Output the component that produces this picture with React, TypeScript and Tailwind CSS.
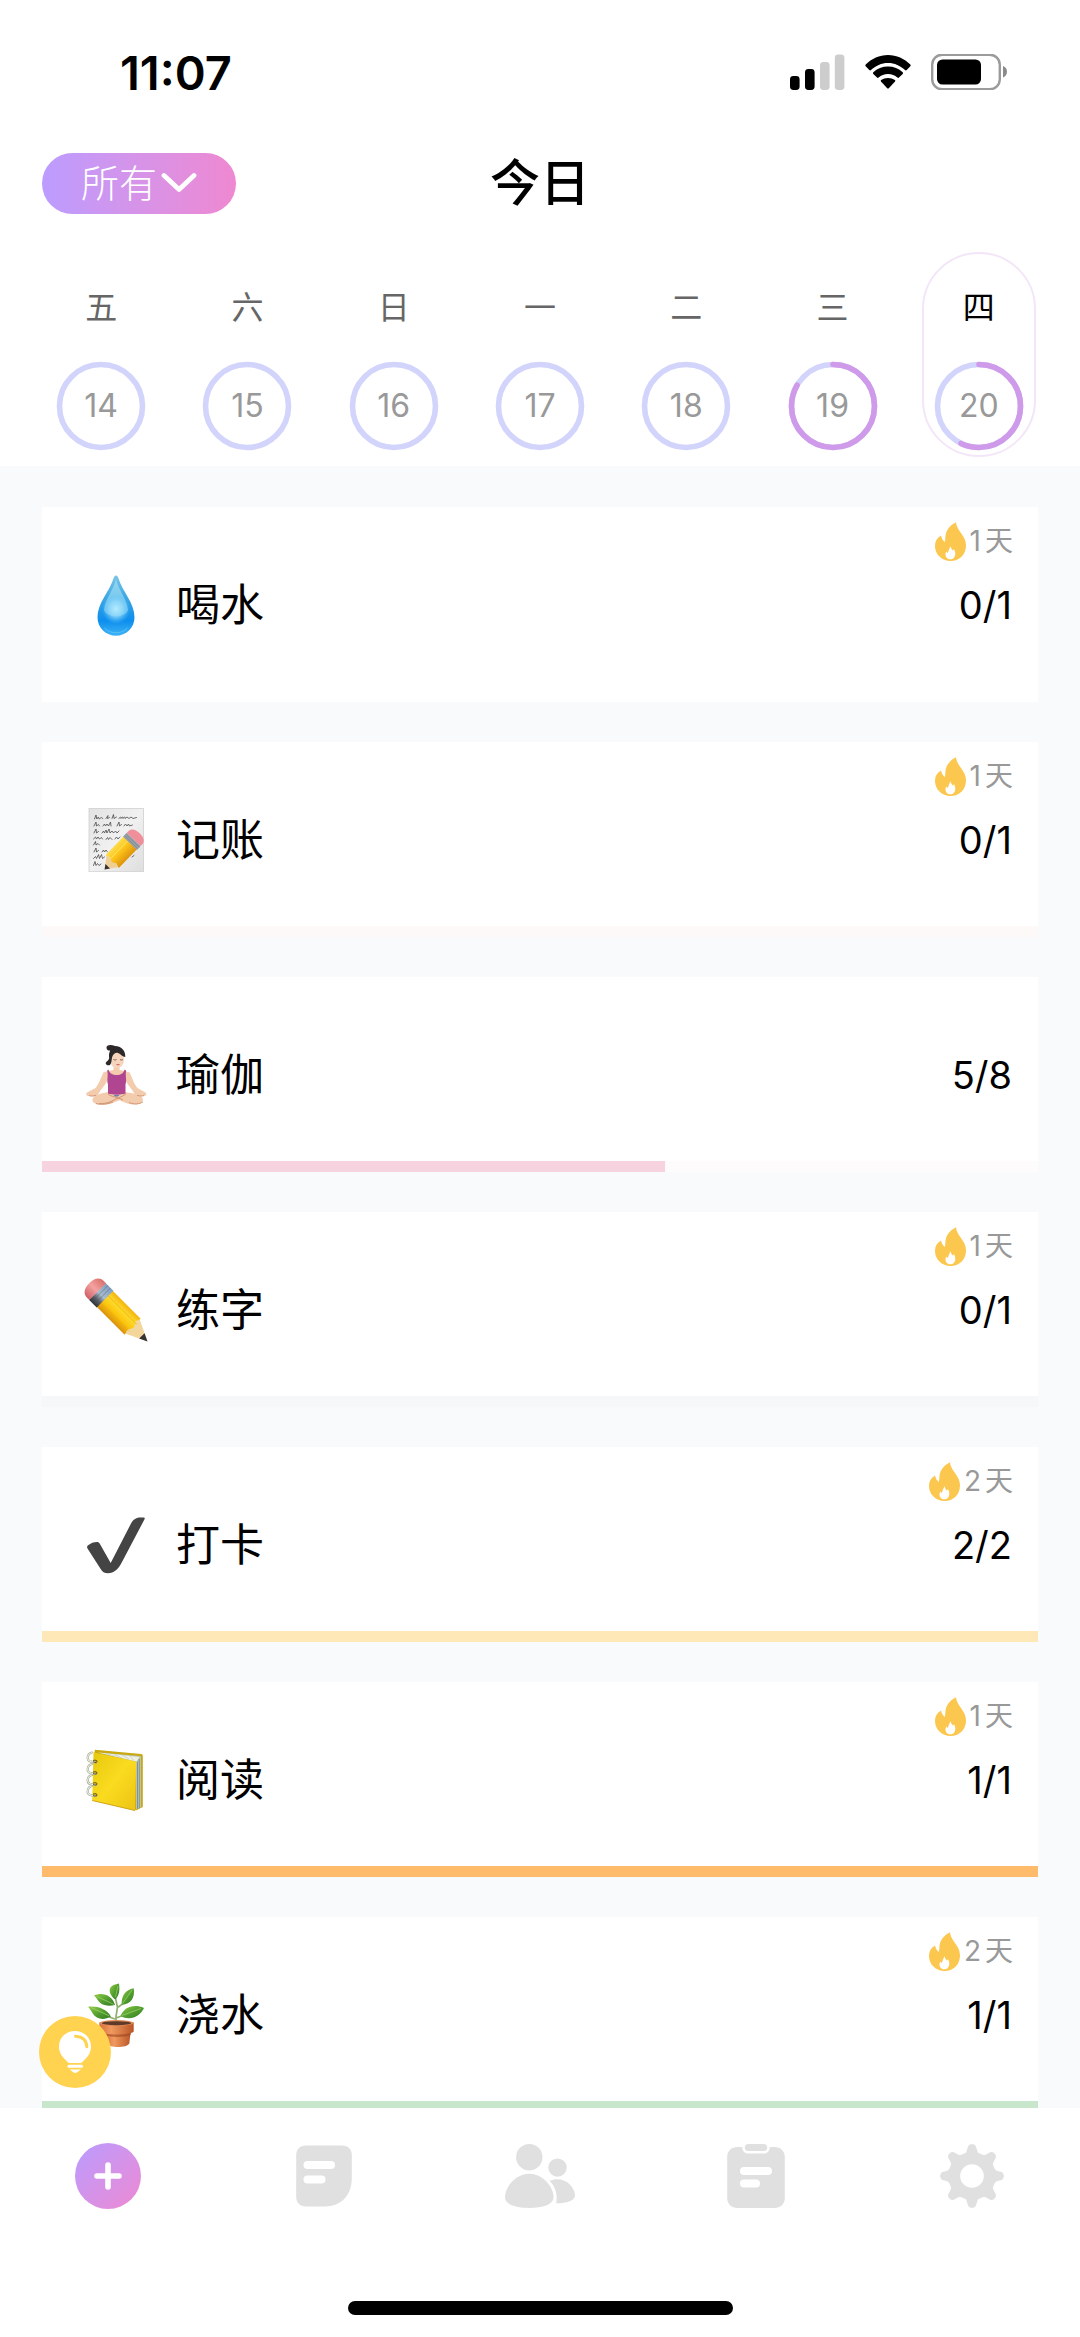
import type { ReactNode } from 'react';

const CJK = "font-['Inter','Noto_Sans_CJK_SC',sans-serif]";

/* ---------- status bar ---------- */

function StatusBar() {
  return (
    <div className="flex h-36 shrink-0 items-center justify-between pr-[73px] pl-[120px]">
      <span className="text-[47px] leading-none font-semibold text-black">11:07</span>
      <div className="flex items-center gap-5" aria-hidden="true">
        <svg className="h-9 w-[55px]" viewBox="0 0 55 36">
          <rect x="0" y="22" width="9.6" height="14" rx="3.4" fill="#000" />
          <rect x="15" y="15" width="9.6" height="21" rx="3.4" fill="#000" />
          <rect x="30" y="8" width="9.6" height="28" rx="3.4" fill="#cdcdcd" />
          <rect x="44.8" y="0.5" width="9.6" height="35.5" rx="3.4" fill="#cdcdcd" />
        </svg>
        <svg className="h-9 w-[46px]" viewBox="0 0 46 36">
          <path d="M0.7 10.6C6.600 4.500 14.500 1 23 1s16.400 3.500 22.300 9.600c.5.500.5 1.200 0 1.700l-3.600 3.700c-.5.500-1.200.5-1.700 0C35.500 11.600 29.500 8.900 23 8.900S10.500 11.600 6 16c-.5.500-1.200.5-1.700 0L.7 12.300c-.5-.5-.5-1.200 0-1.700Z" fill="#000" />
          <path d="M8.300 18.300C12.200 14.600 17.300 12.600 23 12.600s10.800 2 14.700 5.700c.5.500.5 1.100 0 1.600l-3.700 3.700c-.4.500-1.100.5-1.600 0-2.500-2.300-5.700-3.600-9.400-3.600s-6.900 1.300-9.400 3.600c-.5.500-1.200.5-1.600 0l-3.700-3.700c-.5-.5-.5-1.100 0-1.600Z" fill="#000" />
          <path d="M16.100 26.100C18 24.700 20.400 24 23 24s5 .7 6.900 2.100c.5.400.5 1 .1 1.500l-6.200 6.600c-.5.500-1.100.5-1.600 0L16 27.600c-.4-.5-.4-1.100.1-1.500Z" fill="#000" />
        </svg>
        <svg className="h-9 w-[76px]" viewBox="0 0 76 36">
          <rect x="1.200" y="0.700" width="67.600" height="34.600" rx="10" fill="none" stroke="#9b9b9b" strokeWidth="2.400" />
          <rect x="6" y="5.500" width="44" height="25" rx="5.500" fill="#000" />
          <path d="M72 12c2.600 1 4 3.100 4 5.700s-1.400 4.700-4 5.700Z" fill="#8b8b8b" />
        </svg>
      </div>
    </div>
  );
}

/* ---------- week strip ---------- */

type Day = { label: string; date: number; progress: number; selected?: boolean };

const DAYS: Day[] = [
  { label: '五', date: 14, progress: 0 },
  { label: '六', date: 15, progress: 0 },
  { label: '日', date: 16, progress: 0 },
  { label: '一', date: 17, progress: 0 },
  { label: '二', date: 18, progress: 0 },
  { label: '三', date: 19, progress: 5 / 6 },
  { label: '四', date: 20, progress: 4 / 7, selected: true },
];

function DayButton({ label, date, progress, selected }: Day) {
  return (
    <button
      type="button"
      aria-pressed={!!selected}
      className={`flex h-[205px] w-[114px] flex-col items-center justify-between rounded-full border-2 pt-[34px] pb-1 ${
        selected ? 'border-[#f3e6f8] text-black' : 'border-transparent text-[#666]'
      }`}
    >
      <span className="text-[32px] leading-10">{label}</span>
      <span className="grid size-[90px] place-items-center text-[#999]">
        <svg className="col-start-1 row-start-1 size-full -rotate-90" viewBox="0 0 90 90" aria-hidden="true">
          <circle cx="45" cy="45" r="41.500" fill="none" stroke="#d2d4fc" strokeWidth="5.600" />
          {progress > 0 && (
            <circle
              cx="45"
              cy="45"
              r="41.500"
              fill="none"
              stroke="#ce9ae9"
              strokeWidth="5.600"
              strokeLinecap="round"
              pathLength={1}
              strokeDasharray={`${progress} 1`}
            />
          )}
        </svg>
        <span className="col-start-1 row-start-1 text-[32px] leading-10">{date}</span>
      </span>
    </button>
  );
}

/* ---------- habit pictures ---------- */

function Picture({ children }: { children: ReactNode }) {
  return (
    <svg className="size-16 shrink-0" viewBox="0 0 64 64" aria-hidden="true">
      {children}
    </svg>
  );
}

function DropPicture() {
  return (
    <Picture>
      <defs>
        <linearGradient id="dropBody" x1="0" y1="0" x2="0" y2="1">
          <stop offset="0" stopColor="#7cc6e6" />
          <stop offset="0.35" stopColor="#3fa9e4" />
          <stop offset="0.75" stopColor="#0d8eee" />
          <stop offset="1" stopColor="#3fb4f5" />
        </linearGradient>
        <radialGradient id="dropShine" cx="0.5" cy="0.5" r="0.5">
          <stop offset="0" stopColor="#b5ebff" />
          <stop offset="0.5" stopColor="#93dafb" stopOpacity="0.8" />
          <stop offset="1" stopColor="#5cc0f5" stopOpacity="0" />
        </radialGradient>
      </defs>
      <path d="M32 2.500c1.300 0 2 1.400 2.700 3.600C38.500 18.500 50.500 30 50.500 44.300 50.500 55 42 62.800 32 62.800S13.500 55 13.500 44.300C13.500 30 25.500 18.500 29.300 6.100 30 3.900 30.700 2.500 32 2.500Z" fill="url(#dropBody)" />
      <path d="M32 6c2 10 11 20 12 31-3 8-21 8-24 0 1-11 10-21 12-31Z" fill="#b5ecfa" opacity="0.500" />
      <ellipse cx="32" cy="36" rx="14" ry="15" fill="url(#dropShine)" />
      <path d="M20 54c6 7 18 7 24 0-3 8-21 8-24 0Z" fill="#5cc6fa" opacity="0.8" />
    </Picture>
  );
}

function MemoPicture() {
  return (
    <Picture>
      <defs>
        <linearGradient id="paper" x1="0" y1="0" x2="1" y2="1">
          <stop offset="0" stopColor="#e2e2e2" />
          <stop offset="0.5" stopColor="#f1f1f1" />
          <stop offset="1" stopColor="#dedede" />
        </linearGradient>
        <linearGradient id="memoPencil" x1="0" y1="0" x2="0" y2="1">
          <stop offset="0" stopColor="#fddc4a" />
          <stop offset="0.45" stopColor="#fcc419" />
          <stop offset="1" stopColor="#dd930c" />
        </linearGradient>
      </defs>
      <rect x="5" y="0.300" width="54.500" height="63.500" fill="url(#paper)" stroke="#cacaca" strokeWidth="0.700" />
      <g fill="none" stroke="#4a4a4a" strokeWidth="0.800" strokeLinecap="round">
        <path d="M10.500 11l1.500-4 .8 4 1.500-2 1 2 2-1.500 1.500 1M22 10.500l2-3-.5 3 2-1M28 10.500l1.500-4 .5 4 2.500-1.500M35 10.500c1-2 2-2 2 0 1-2 2-2 2 0 1-2 2-2 2 0l2-1.500 2 1.500 2-1.500 2 1.500 3.500-1" />
        <path d="M10 18l2-4 .5 4 2-1.500 1 1.500M19 18l1.500-2 1 2 1.500-2 1.500 2 2-4 .5 4M33 18l2-4 .5 4 2-1.500M40 18l1.500-2 1.500 2 1.500-2 1 2 3-1" />
        <path d="M10 25l2-4 .5 4 2-1.500M18 25l1.500-2 1 2 1.500-3 1 3 2-4 1 4 2-2 1.500 2 2-2 1.500 2 2-2" />
        <path d="M9.500 31l2-2 1 2 1.500-2 1.500 2 2-1.500 1 1.500M22 31.500l1.500-2 1 2 1.500-2 2 2M31 31l1.500-2 1.500 2 2-2" />
        <path d="M9.500 37l2-3.500.5 3.500 2-1.500 1.500 1.500" />
        <path d="M10 44l2-4 .5 4 2-1.500M18 44l1.500-2 1 2 1.500-2 1.500 2" />
        <path d="M9.500 50.500l2-2 1 2 2-4 1 4 2-4 1 4 2-1.500" />
        <path d="M9.500 57.500l1.500-4 1 4 1.500-2 1.500 2 2-1.500M48 49l2-1.500" />
      </g>
      <g transform="translate(20 61) rotate(-46)">
        <path d="M0 .8 12-7.800 12 9.600Z" fill="#f0cf94" />
        <path d="M0 .8 4.500-2.400 4.500 4Z" fill="#333" />
        <path d="M11-8.500H38V10H11l1.500-5L10.500.7l2-4.700Z" fill="url(#memoPencil)" />
        <path d="M12-2.500H38" stroke="#ffe873" strokeWidth="0.800" />
        <rect x="36.500" y="-8.800" width="5.500" height="19.200" fill="#9aa1a8" />
        <path d="M38.200-8.500v19M40.200-8.500v19" stroke="#7d848b" strokeWidth="0.700" />
        <path d="M42-8.800h2c4.500 0 6.500 4 6.500 9.600s-2 9.600-6.500 9.600h-2Z" fill="#f08f9a" />
      </g>
    </Picture>
  );
}

function YogaPicture() {
  return (
    <Picture>
      <g fill="#f3ccae">
        <path d="M20 28.500c-3 5-4 11-8.500 16.500l-8.500 4.500c-1.500 1-1 3 1 3.500l8 .5c2-1 3-4 4.500-6C20 43.500 23 38.500 25.500 33.500Z" />
        <path d="M45 28.500c3 5 4 11 8.500 16.500l8 4.500c1.500 1 1 3-1 3.500l-7.500.5c-2-1-3-4-4.500-6C45 43.500 42 38.500 39.500 33.500Z" />
        <path d="M29.500 22h6v5c3 1 7 .5 9.500 3l-4 6H24l-4-6c2.500-2.500 6.500-2 9.500-3Z" />
        <path d="M24 49c-6 1-14 3-15.500 7-.8 4 4 6 10 5.800 6 0 11-2 17-4.500 6 2.700 10 4.500 16 4.200 5 0 8-2.500 7.300-5.500C58 52 48 50 41 49Z" />
      </g>
      <path d="M24 51c3 3 10 3 15 6M42 51c-4 3-9 4-14 7-4 2-9 3-13 2.500" fill="none" stroke="#d09673" strokeWidth="1" />
      <path d="M5 52.500c2 .8 4 .6 7-.2M60 52.500c-2 .8-4 .6-7-.2M12 60.500c6 1.500 12 .5 17-1.500M45 59.500c5 2.200 10 1.600 14-.5" fill="none" stroke="#cf9270" strokeWidth="0.900" />
      <ellipse cx="33" cy="16.500" rx="7" ry="8.800" fill="#f6d5bc" />
      <path d="M22.500 5C22 2.500 26 1 31 3c6 0 10.500 4 10.300 11-2.800 0-4.300-3-7.300-4-2.500-.7-5 1-6 4.500C27.500 18 27.500 20 26 22c-2.500 1-4.500-.5-4.300-2.300.8-1.200 3.300-2.200 3.500-4.700-.4-2.500-.4-5 1-7.500-1.700.5-3.500-.7-3.700-2.500Z" fill="#2c2829" />
      <path d="M29.500 16.500c1 .6 2 .6 3 0M36 16.500c1 .6 2 .6 3 0" fill="none" stroke="#5b4238" strokeWidth="0.800" />
      <path d="M32.500 21.500c1 .5 2 .5 3 0" fill="none" stroke="#c25a5a" strokeWidth="1" />
      <path d="M24.500 26.500c1 4 4 5.500 8.200 5.500S39.500 30.500 40.500 26.500l1.500 1c-.8 6 1 9-.5 14v9c-4 1.500-13 1.500-17.500 0v-9c-1.500-5 .5-8-.8-14Z" fill="#b04591" />
      <path d="M29 51.500c2 .8 5 .8 7 0l-2 2h-3Z" fill="#6a7fb0" />
    </Picture>
  );
}

function PencilPicture() {
  return (
    <Picture>
      <defs>
        <linearGradient id="pencilBody" x1="0" y1="0" x2="0" y2="1">
          <stop offset="0" stopColor="#f3b20c" />
          <stop offset="0.3" stopColor="#fddb2e" />
          <stop offset="0.62" stopColor="#fcc70f" />
          <stop offset="1" stopColor="#d9900b" />
        </linearGradient>
        <linearGradient id="pencilBand" x1="0" y1="0" x2="0" y2="1">
          <stop offset="0" stopColor="#7f9fc4" />
          <stop offset="0.5" stopColor="#a9bccd" />
          <stop offset="0.75" stopColor="#5a6068" />
          <stop offset="1" stopColor="#2f3237" />
        </linearGradient>
        <linearGradient id="pencilEraser" x1="0" y1="0" x2="0" y2="1">
          <stop offset="0" stopColor="#d9706c" />
          <stop offset="0.5" stopColor="#f4a2a0" />
          <stop offset="1" stopColor="#cf5f66" />
        </linearGradient>
      </defs>
      <g transform="translate(63.500 63.500) rotate(-135)">
        <g transform="scale(1 -1)">
          <path d="M0 0 22-10.500 22 10.500Z" fill="#f3d69b" />
          <path d="M0 0 8-3.800 8 3.800Z" fill="#333" />
          <path d="M21-11.300H62V11.300H21l1.500-5.500L19.500 0l3-5.500Z" fill="url(#pencilBody)" />
          <path d="M20-4.500H62M21 6H62" stroke="#eca90b" strokeWidth="0.800" />
          <rect x="60" y="-11.800" width="11" height="23.600" fill="url(#pencilBand)" />
          <path d="M64-11.500v23M67.500-11.500v23" stroke="#4a5058" strokeOpacity="0.450" strokeWidth="0.900" />
          <path d="M70.500-11.800h3.500c5.500 0 8.500 5 8.500 11.800s-3 11.800-8.500 11.800h-3.500Z" fill="url(#pencilEraser)" />
        </g>
      </g>
    </Picture>
  );
}

function CheckPicture() {
  return (
    <Picture>
      <path d="M3.500 35.500c-.7-1.200-.5-2.400.6-3.200C6.500 30.200 10 29 13 29c1.300 0 2.200.6 2.800 1.800L26.700 50 46.500 11.500C49 6.500 52 4.500 56 4.500h3.500c1.200 0 1.500.8 1 1.800L38 49c-3.500 7-8 11.300-14 11.300-3.700 0-5.700-1.500-7.500-4.500Z" fill="#444" />
    </Picture>
  );
}

function NotebookPicture() {
  return (
    <Picture>
      <defs>
        <linearGradient id="cover" x1="0" y1="0" x2="1" y2="1">
          <stop offset="0" stopColor="#e6c80c" />
          <stop offset="0.5" stopColor="#fadb1f" />
          <stop offset="1" stopColor="#ecc314" />
        </linearGradient>
      </defs>
      <path d="M11 1.800 57 6c1.200.2 1.800.8 1.800 2V59l-7 3.500L10 6Z" fill="#c9a90d" />
      <path d="M14 4.500 57 8v51l-5 2.500V14Z" fill="#b9c3b5" />
      <path d="M53.500 13.500v47.500M55.300 11v49" stroke="#7f8f86" strokeWidth="0.900" />
      <path d="M14 4.500 55.500 9l-3 4.500Z" fill="#eef0e4" />
      <path d="M22 5.500l9 3M30 6.500l8 3.500M38 7l7 4M46 8l4 4.500" stroke="#c9cdbf" strokeWidth="0.800" />
      <path d="M9.500 4.200 50.800 13.200c.9.200 1.400.8 1.400 1.700L51 62.500 8.200 52.500C8.800 36 9 20 9.500 4.200Z" fill="url(#cover)" />
      <path d="M8.200 52.500 51 62.500" stroke="#c99e10" strokeWidth="0.900" />
      {[9, 20.500, 31.500, 42.500].map((y) => (
        <g key={y} fill="none" strokeLinecap="round">
          <path d={`M8 ${y - 4.500}c-5 1-6 8-1 9.200l5 .8`} stroke="#9aa08c" strokeWidth="2.200" />
          <path d={`M8 ${y - 4.500}c-5 1-6 8-1 9.200l5 .8`} stroke="#edf0de" strokeWidth="1.200" />
          <path d={`M9.500 ${y + 5}c2 1 3.500 .6 3.500-.6s-1.500-1.400-3.500-1`} stroke="#5a4a10" strokeWidth="1" />
        </g>
      ))}
    </Picture>
  );
}

function PlantPicture() {
  return (
    <Picture>
      <defs>
        <linearGradient id="leaf" x1="0" y1="0" x2="1" y2="1">
          <stop offset="0" stopColor="#8fcc45" />
          <stop offset="0.550" stopColor="#4f9c2e" />
          <stop offset="1" stopColor="#357a25" />
        </linearGradient>
        <linearGradient id="pot" x1="0" y1="0" x2="1" y2="0">
          <stop offset="0" stopColor="#d9703c" />
          <stop offset="0.350" stopColor="#f09a5f" />
          <stop offset="1" stopColor="#b95526" />
        </linearGradient>
      </defs>
      <path d="M32 39c-.5-6 .5-10 1.500-14.500L31.500 15M33.500 24.500 40 20M32 35l7-2.500M31 36l-6-2" fill="none" stroke="#8fb070" strokeWidth="1.700" />
      <g fill="url(#leaf)">
        <path d="M35 .5c.8 6 .8 11.500-3.800 16C26 12.500 23.500 6 28 3 30 1.500 32.500 1.500 35 .5Z" />
        <path d="M10 12.500c8-3.500 18-1 21 9.500-8 2-14.500 0-17.500-5.200C12.500 15 11.500 14 10 12.500Z" />
        <path d="M49.700 5.200c1.500 9-2.500 16-12 16.500C37 13 41.500 6.500 49.700 5.200Z" />
        <path d="M4 23.800c9-1 18.500 2 23 9.700-7 4-14.500 3-18.500-3.200C7.300 28 6 26 4 23.800Z" />
        <path d="M60 25c-3.500 8-13.500 13.500-23.500 8C40 24 50 20.500 60 25Z" />
      </g>
      <path d="M34 3l-2.500 11M13 13.500l17 8M48 7 38.500 20.500M7 24.500l18.500 8.500M57 25.500l-19 7" stroke="#b5dc7e" strokeWidth="0.600" />
      <path d="M21 48h25.800l-1.500 12.500C44 63 39 64 34 64s-10-1-11.500-3.500Z" fill="url(#pot)" />
      <path d="M20.500 48.500h26.600l-.4 3.500c-7 2.500-19 2.500-25.700 0Z" fill="#9c4520" opacity="0.600" />
      <path d="M15.300 39.500h34.400v9C48 52.500 17 52.500 15.300 48.500Z" fill="url(#pot)" />
      <ellipse cx="32.500" cy="40" rx="17.200" ry="2.900" fill="#e08a55" />
      <ellipse cx="32.500" cy="40.200" rx="14.500" ry="2" fill="#5e3a28" />
    </Picture>
  );
}

function Flame() {
  return (
    <svg className="h-[39px] w-[31px] shrink-0" viewBox="0 0 31 39" aria-hidden="true">
      <path d="M21 .3c.3 4.200 2.500 7.200 5 10.700 2.800 4 5 7.500 5 12.400C31 32.500 24.200 39 15.500 39S0 32.500 0 23.800c0-4.500 2-8 6-10.300.6 2.500 1.400 4.500 3.700 6.500C10.800 17.500 9.900 14.500 11 11.200 12.600 6.200 16.500 2.500 21 .3Z" fill="#fcc74f" />
      <path d="M15.800 24.300c.1 1.700.8 2.700 2 4.200.5-.4.900-.9 1.200-1.600.7 1.500 1.300 3 1.300 4.800 0 3.300-2.100 5.600-4.900 5.600-2.900 0-4.900-2-4.900-4.800 0-1.200.2-2.100.7-3.100.6.8 1 1.100 1.700 1.300.9-2.100 1.300-4.600 2.900-6.400Z" fill="#fff" />
    </svg>
  );
}

/* ---------- habit list ---------- */

type Habit = {
  name: string;
  picture: ReactNode;
  done: number;
  goal: number;
  streak?: number;
  track: string;
  fill: string;
};

const HABITS: Habit[] = [
  { name: '喝水', picture: <DropPicture />, done: 0, goal: 1, streak: 1, track: 'bg-white', fill: 'bg-sky-200' },
  { name: '记账', picture: <MemoPicture />, done: 0, goal: 1, streak: 1, track: 'bg-[#fdf9f8]', fill: 'bg-orange-200' },
  { name: '瑜伽', picture: <YogaPicture />, done: 5, goal: 8, track: 'bg-[#fefbfd]', fill: 'bg-[#f6d3df]' },
  { name: '练字', picture: <PencilPicture />, done: 0, goal: 1, streak: 1, track: 'bg-[#f6f7f9]', fill: 'bg-gray-300' },
  { name: '打卡', picture: <CheckPicture />, done: 2, goal: 2, streak: 2, track: 'bg-white', fill: 'bg-[#fee8b8]' },
  { name: '阅读', picture: <NotebookPicture />, done: 1, goal: 1, streak: 1, track: 'bg-white', fill: 'bg-[#febb6b]' },
  { name: '浇水', picture: <PlantPicture />, done: 1, goal: 1, streak: 2, track: 'bg-white', fill: 'bg-[#c7e6cb]' },
];

function HabitCard({ name, picture, done, goal, streak, track, fill }: Habit) {
  return (
    <li className="relative flex h-[195px] shrink-0 items-center gap-7 bg-white pr-[26px] pl-[42px]">
      {picture}
      <h2 className="flex-1 text-[44px] leading-[56px] font-normal text-black">{name}</h2>
      <span className="text-[38px] leading-[56px] text-black">
        {done}/{goal}
      </span>
      {streak && (
        <div className="absolute top-3.5 right-[25px] flex items-center gap-1 text-[28px] leading-10 text-[#999]">
          <Flame />
          <span className="flex gap-1">
            <span>{streak}</span>
            <span>天</span>
          </span>
        </div>
      )}
      <div className={`absolute inset-x-0 bottom-0 h-[11px] ${track}`}>
        <div className={`h-full ${fill}`} style={{ width: `${(done / goal) * 100}%` }} />
      </div>
    </li>
  );
}

/* ---------- bottom bar ---------- */

const GEAR_PATH = (() => {
  const steps = 192;
  const points: string[] = [];
  for (let i = 0; i < steps; i++) {
    const a = (i / steps) * Math.PI * 2;
    const c = Math.cos(a * 8);
    const r = 28 + 4.4 * Math.tanh((c - 0.25) * 1.8);
    points.push(`${(32 + r * Math.cos(a)).toFixed(2)} ${(32 + r * Math.sin(a)).toFixed(2)}`);
  }
  return `M${points.join('L')}ZM32 20.200a11.800 11.800 0 1 0 0 23.600 11.800 11.800 0 0 0 0-23.600Z`;
})();

function NavButton({ label, children }: { label: string; children: ReactNode }) {
  return (
    <button type="button" aria-label={label} className="flex flex-1 justify-center">
      {children}
    </button>
  );
}

function BottomBar() {
  return (
    <footer className="flex shrink-0 flex-col items-center bg-white pt-[35px] pb-[22px]">
      <nav className="flex w-full items-center">
        <NavButton label="添加">
          <span className="grid size-[66px] place-items-center rounded-full bg-linear-to-br from-[#b99bff] to-[#ed88d2]">
            <svg className="size-7" viewBox="0 0 28 28" aria-hidden="true">
              <path d="M14 3v22M3 14h22" stroke="#fff" strokeWidth="5.600" strokeLinecap="round" />
            </svg>
          </span>
        </NavButton>
        <NavButton label="记录">
          <svg className="size-16" viewBox="0 0 64 64" aria-hidden="true">
            <path d="M14 1.500h36c6 0 9.800 4 9.800 9.500v23C59.800 51 49 62.500 33 62.500H14C8 62.500 4.200 58.500 4.200 53V11C4.200 5.500 8 1.500 14 1.500Z" fill="#e0e0e0" />
            <rect x="11.500" y="17" width="31.500" height="8" rx="4" fill="#fff" />
            <rect x="11.500" y="31.500" width="22" height="8" rx="4" fill="#fff" />
          </svg>
        </NavButton>
        <NavButton label="好友">
          <svg className="h-16 w-[70px]" viewBox="0 0 70 64" aria-hidden="true">
            <g fill="#e0e0e0">
              <circle cx="24.300" cy="13.200" r="13.200" />
              <circle cx="52.500" cy="23.600" r="9.200" />
              <path d="M24.300 29.800C37 29.800 48.500 42 48.500 53.500c0 7-11 10.500-24.200 10.500S0 60.500 0 53.500c0-11.500 11.500-23.700 24.300-23.700Z" />
              <path d="M44.500 36.800c2.400-1.100 5-1.600 8-1.600C62 35.200 70 43.500 70 51.500c0 5-8 7.800-18.800 7.800 1.700-9-1-17-6.700-22.500Z" />
            </g>
          </svg>
        </NavButton>
        <NavButton label="计划">
          <svg className="size-16" viewBox="0 0 64 64" aria-hidden="true">
            <path d="M13.500 3h4.800c0 4 2.200 6.500 6 6.500h15.400c3.800 0 6-2.500 6-6.500h4.800c6 0 10.300 4 10.300 10v41c0 6-4.300 10-10.300 10h-37C7.500 64 3.200 60 3.200 54V13c0-6 4.300-10 10.300-10Z" fill="#e0e0e0" />
            <rect x="20.800" y="0" width="22.400" height="7" rx="3.500" fill="#e0e0e0" />
            <rect x="16" y="23" width="32" height="8" rx="4" fill="#fff" />
            <rect x="16" y="35.500" width="20" height="8" rx="4" fill="#fff" />
          </svg>
        </NavButton>
        <NavButton label="设置">
          <svg className="size-16" viewBox="0 0 64 64" aria-hidden="true">
            <path d={GEAR_PATH} fill="#e0e0e0" fillRule="evenodd" />
          </svg>
        </NavButton>
      </nav>
      <div className="mt-[92px] h-3.5 w-[385px] rounded-full bg-black" />
    </footer>
  );
}

/* ---------- page ---------- */

export default function App() {
  return (
    <div className={`flex h-screen flex-col bg-white ${CJK}`} lang="zh-CN">
      <StatusBar />
      <header className="grid shrink-0 grid-cols-[1fr_auto_1fr] items-center px-[42px] pt-[7px] pb-2">
        <button
          type="button"
          className="flex h-[61px] w-[194px] items-center justify-center gap-1 rounded-full bg-linear-to-r from-[#bb9cff] to-[#ef88d1] text-[38px] leading-[56px] font-light text-white"
        >
          <span>所有</span>
          <svg className="h-6 w-9" viewBox="0 0 36 24" aria-hidden="true">
            <path d="M3 4.500 18 18.500 33 4.500" fill="none" stroke="#fff" strokeWidth="4.800" strokeLinecap="round" strokeLinejoin="round" />
          </svg>
        </button>
        <h1 className="text-[50px] leading-[64px] font-medium text-black">今日</h1>
      </header>
      <div className="flex shrink-0 px-7 pt-[29px] pb-[9px]">
        {DAYS.map((day) => (
          <div key={day.date} className="flex flex-1 justify-center">
            <DayButton {...day} />
          </div>
        ))}
      </div>
      <main className="relative min-h-0 flex-1 bg-[#f8fafc]">
        <ul className="flex h-full flex-col gap-10 overflow-y-auto px-[42px] pt-[41px] [scrollbar-width:none]">
          {HABITS.map((habit) => (
            <HabitCard key={habit.name} {...habit} />
          ))}
        </ul>
        <button
          type="button"
          aria-label="提示"
          className="absolute bottom-5 left-[39px] grid size-[72px] place-items-center rounded-full bg-[#ffd24f]"
        >
          <svg className="h-11 w-[34px]" viewBox="0 0 34 44" aria-hidden="true">
            <path d="M17 1C26.200 1 33 7.800 33 16.500c0 5.500-2.500 9.500-6 12.800-2 1.900-2.600 3.700-5 3.700H12c-2.400 0-3-1.800-5-3.700-3.500-3.300-6-7.300-6-12.800C1 7.800 7.800 1 17 1Z" fill="#fff" />
            <path d="M17.500 6.200c7 .5 11 4.500 11.300 10.500" fill="none" stroke="#ffd24f" strokeWidth="3" strokeLinecap="round" />
            <path d="M11 36.300h12.500" stroke="#fff" strokeWidth="3" strokeLinecap="round" />
            <path d="M11.500 39.500h11.500l-3.500 2.500c-1.500 1.200-3 1.200-4.500 0Z" fill="#fff" />
          </svg>
        </button>
      </main>
      <BottomBar />
    </div>
  );
}
